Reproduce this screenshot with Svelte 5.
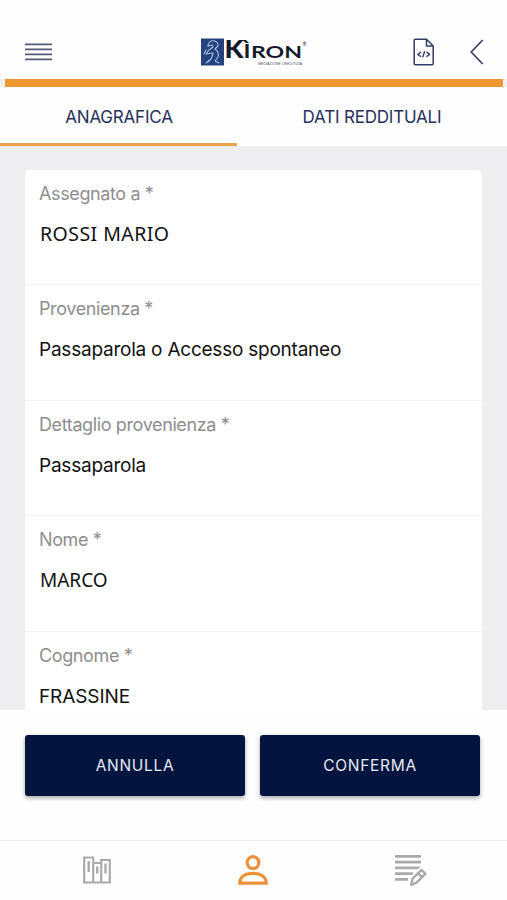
<script>
let activeTab = $state(0);

const tabs = ["ANAGRAFICA", "DATI REDDITUALI"];

const fields = [
  { label: "Assegnato a *", value: "ROSSI MARIO", cls: "assignee" },
  { label: "Provenienza *", value: "Passaparola o Accesso spontaneo", cls: "" },
  { label: "Dettaglio provenienza *", value: "Passaparola", cls: "" },
  { label: "Nome *", value: "MARCO", cls: "name" },
  { label: "Cognome *", value: "FRASSINE", cls: "surname" },
];
</script>

<div class="screen">
  <header>
    <button class="icon menu" aria-label="Menu">
      <svg width="27" height="18" viewBox="0 0 27 18" stroke="#555b78" stroke-width="1.9">
        <path d="M0 1.4h27M0 6.4h27M0 11.4h27M0 16.4h27" />
      </svg>
    </button>
    <svg class="logo" width="108" height="46" viewBox="0 -8 108 46">
      <rect x="1" y="1.5" width="23" height="27" fill="#24427d" />
      <g fill="none" stroke="#a9bfdf" stroke-width="1.1" stroke-linecap="round" stroke-linejoin="round">
        <path d="M8 9c0-4 3-6 7-5 3 1 4 4 2 6l-2 2c3 2 4 5 3 8l-3 4 4 2" />
        <path d="M8 9l4-1 1 2-4 3-3 4 7-1M13 17l-2 5-5 4M6 13l-2 4M11 22l-3 3" />
      </g>
      <g class="brand">
        <text x="24.5" y="21" font-size="25" font-weight="900" textLength="19" lengthAdjust="spacingAndGlyphs">K</text>
        <text x="43.5" y="21" font-size="18" font-weight="700" textLength="7" lengthAdjust="spacingAndGlyphs">Ì</text>
        <text x="51" y="21" font-size="17" font-weight="700" textLength="51" lengthAdjust="spacingAndGlyphs">RON</text>
        <text x="102.5" y="9" font-size="5">®</text>
        <text class="tagline" x="58" y="28" font-size="4.4" textLength="44" lengthAdjust="spacingAndGlyphs">MEDIAZIONE CREDITIZIA</text>
      </g>
    </svg>
    <div class="actions">
      <button class="icon" aria-label="Documento">
        <svg width="22" height="28" viewBox="0 0 22 28" fill="none" stroke="#343c64" stroke-width="1.5" stroke-linejoin="round">
          <path d="M1.2 2.2q0-1 1-1H13.5L20.2 8v17.8q0 1-1 1H2.2q-1 0-1-1z" />
          <path d="M13.5 1.4V8h6.5" />
          <path d="M8 14l-3.2 2.4L8 18.8M13.5 14l3.2 2.4-3.2 2.4M11.7 13.2l-2 6.2" stroke-width="1.4" />
        </svg>
      </button>
      <button class="icon" aria-label="Indietro">
        <svg width="14" height="26" viewBox="0 0 14 26" fill="none" stroke="#343c64" stroke-width="1.6">
          <path d="M12.7 1L1.2 13l11.5 12" />
        </svg>
      </button>
    </div>
  </header>
  <div class="accent"><div></div></div>

  <nav class="tabs">
    {#each tabs as tab, i}
      <button class:active={activeTab === i} onclick={() => activeTab = i}>{tab}</button>
    {/each}
  </nav>

  <main>
    <div class="card">
      {#each fields as field}
        <div class="field">
          <div class="label">{field.label}</div>
          <div class="value {field.cls}">{field.value}</div>
        </div>
      {/each}
    </div>
  </main>

  <div class="buttons">
    <button>ANNULLA</button>
    <button>CONFERMA</button>
  </div>

  <footer>
    <button class="icon" aria-label="Archivio">
      <svg width="28" height="28" viewBox="0 0 28 28" fill="none" stroke="#aaa" stroke-width="2.2">
        <path d="M1.2 1.5h9v25h-9zM10.2 7h8v19.5h-8zM18.2 4h8.6v22.5h-8.6z" />
        <path d="M5.7 5v11M14.2 10.5v7M22.5 7.5v10" stroke-width="2.4" />
      </svg>
    </button>
    <button class="icon" aria-label="Clienti">
      <svg width="30" height="30" viewBox="0 0 30 30" fill="none" stroke="#ed913a" stroke-width="3.2">
        <circle cx="15" cy="7.6" r="5.9" />
        <path d="M1.8 28.2c0-6.5 5.4-9.9 13.2-9.9s13.2 3.4 13.2 9.9z" />
      </svg>
    </button>
    <button class="icon" aria-label="Note">
      <svg width="32" height="32" viewBox="0 0 32 32" fill="none" stroke="#aaa" stroke-width="2.7">
        <path d="M0 2.3h26M0 8.1h26M0 13.9h26M0 19.6h18M0 25.4h13" />
        <path d="M16 31l1.4-6.8L26.5 15l4.6 4.6-9.2 9.2z" stroke="#fefefe" stroke-width="5" />
        <path d="M16.2 30.8l1.4-6.2 8.8-8.8 4 4-8.8 8.8zM23 19.2l4 4" fill="#fefefe" stroke-width="2.4" stroke-linejoin="round" />
        <path d="M15.5 31.3l1-4.5 3.5 3.5z" fill="#aaa" stroke="none" />
      </svg>
    </button>
  </footer>
</div>

<style>
:global(body) {
  margin: 0;
  background: #fff;
}
.screen {
  width: 507px;
  height: 900px;
  display: flex;
  flex-direction: column;
  overflow: hidden;
  background: #fefefe;
  font-family: Inter, "Liberation Sans", sans-serif;
}
button {
  border: 0;
  padding: 0;
  margin: 0;
  background: none;
  font-family: inherit;
}
.icon, .icon svg, .logo {
  display: block;
}
.logo {
  overflow: visible;
}
header {
  height: 79px;
  flex: none;
  box-sizing: border-box;
  padding: 24px 23px 0 25px;
  display: grid;
  grid-template-columns: 175px 108px 1fr;
  align-items: center;
}
.menu {
  justify-self: start;
}
.brand {
  font-family: Lato, sans-serif;
  fill: #151a2c;
}
.tagline {
  font-family: "Liberation Sans", sans-serif;
  fill: #555a68;
}
.actions {
  display: flex;
  justify-content: flex-end;
  align-items: center;
  gap: 35px;
}
.accent {
  height: 8px;
  flex: none;
  padding: 0 4px 0 5px;
  background: #edf1f5;
}
.accent div {
  height: 8px;
  background: #f0982f;
}
.tabs {
  height: 59px;
  flex: none;
  display: grid;
  grid-template-columns: 237px 270px;
}
.tabs button {
  padding-top: 3px;
  border-bottom: 3px solid transparent;
  font-size: 17px;
  letter-spacing: -0.2px;
  color: #27305a;
}
.tabs button.active {
  padding-left: 1px;
  border-bottom-color: #eda04b;
}
main {
  height: 564px;
  flex: none;
  box-sizing: border-box;
  padding: 24px 25px 0;
  background: #eeeef0;
  overflow: hidden;
}
.card {
  background: #fff;
  border-radius: 5px 5px 0 0;
}
.field {
  height: 115.4px;
  box-sizing: border-box;
  padding: 12px 14px 0;
  border-bottom: 1.5px solid #f2f2f3;
}
.label {
  font-size: 18px;
  line-height: 24px;
  letter-spacing: -0.38px;
  color: #8e8e8e;
}
.value {
  margin-top: 16px;
  font-size: 19px;
  line-height: 26px;
  letter-spacing: -0.23px;
  white-space: nowrap;
  color: #111;
}
.assignee, .name {
  margin-top: 15px;
  padding-left: 1px;
  font-family: "Noto Sans", sans-serif;
  letter-spacing: 0;
}
.assignee {
  font-size: 19.5px;
  letter-spacing: 0.45px;
}
.surname {
  letter-spacing: -0.1px;
}
.buttons {
  height: 130px;
  flex: none;
  box-sizing: border-box;
  padding: 25px 27px 44px 25px;
  display: grid;
  grid-template-columns: 1fr 1fr;
  gap: 15px;
}
.buttons button {
  padding-bottom: 1px;
  border-radius: 3px;
  background: #03143f;
  box-shadow: 0 2px 4px rgba(0, 0, 0, 0.35);
  color: #e8ebf3;
  font-size: 15.5px;
  letter-spacing: 0.7px;
}
footer {
  flex: 1;
  box-sizing: border-box;
  border-top: 1px solid #ececec;
  padding: 0 80px 2px 83px;
  display: flex;
  justify-content: space-between;
  align-items: center;
}
</style>
